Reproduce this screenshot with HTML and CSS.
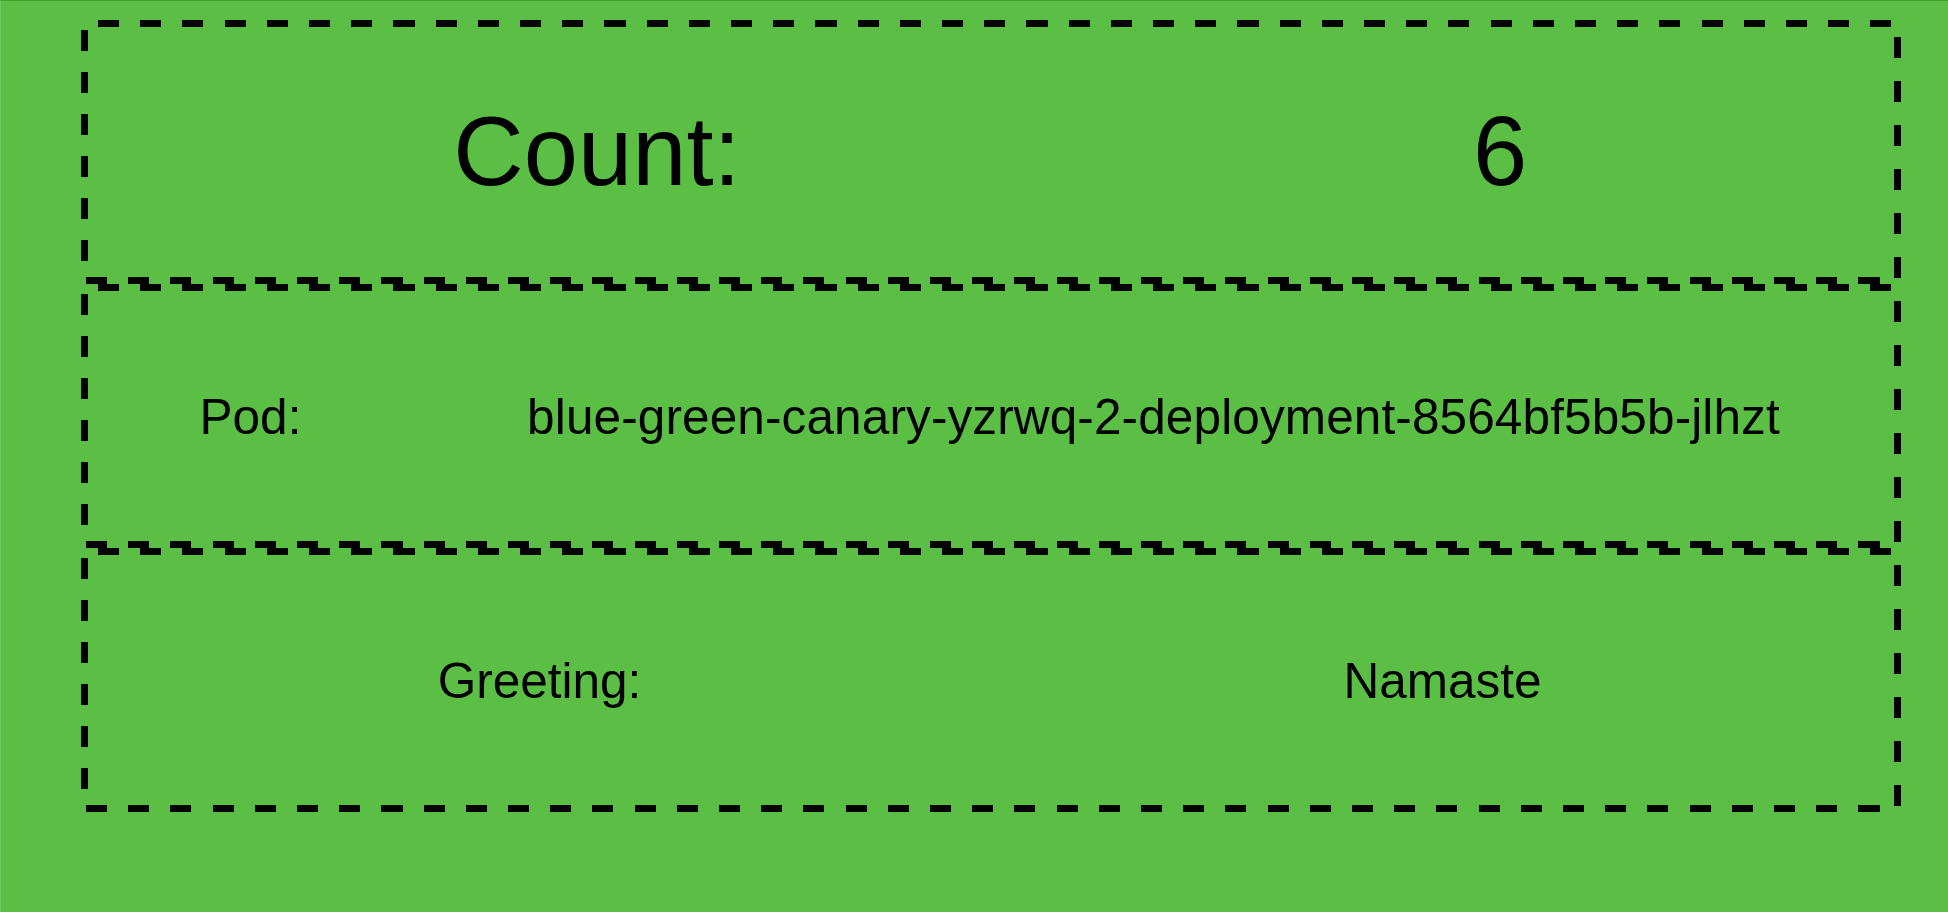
FILE: index.html
```html
<!DOCTYPE html>
<html lang="en">
<head>
<meta charset="utf-8">
<title>Blue Green Canary</title>
<link rel="stylesheet" href="styles.css">
</head>
<body>
  <main class="panel">
    <section class="row row-count">
      <div class="cell">Count:</div>
      <div class="cell">6</div>
    </section>
    <section class="row row-pod">
      <div class="cell">Pod:</div>
      <div class="cell">blue-green-canary-yzrwq-2-deployment-8564bf5b5b-jlhzt</div>
    </section>
    <section class="row row-greeting">
      <div class="cell">Greeting:</div>
      <div class="cell">Namaste</div>
    </section>
  </main>
</body>
</html>
```
FILE: styles.css
```css
html {
  background: #5bbf45;
}
body {
  margin: 0;
  min-height: 912px;
  box-sizing: border-box;
  background: #5bbf45;
  border-top: 1px solid #3ea225;
  border-left: 1px solid #6cc858;
  font-family: "Liberation Sans", Arial, Helvetica, sans-serif;
  color: #000;
}
.panel {
  display: flex;
  flex-direction: column;
  margin: 19px 47px 0 80px;
}
.row {
  --w: 7px;
  --h-dash: repeating-linear-gradient(90deg, #000 0 21.1px, transparent 21.1px 42.2px);
  --v-dash-l: repeating-linear-gradient(180deg, #000 0 21px, transparent 21px 42.1px);
  --v-dash-r: repeating-linear-gradient(180deg, #000 0 21px, transparent 21px 44px);
  display: grid;
  align-items: center;
  height: 264px;
  box-sizing: border-box;
  padding: var(--w);
  border-radius: 6px;
  background:
    var(--h-dash) 17px 0 / calc(100% - 27px) var(--w) no-repeat,
    var(--h-dash) 5px 100% / calc(100% - 26px) var(--w) no-repeat,
    var(--v-dash-l) 0 10px / var(--w) calc(100% - 22px) no-repeat,
    var(--v-dash-r) 100% 17px / var(--w) calc(100% - 22px) no-repeat;
  font-size: 49.5px;
  text-align: center;
}
.row-count {
  grid-template-columns: 1018px 1fr;
  font-size: 97.5px;
}
.row-pod {
  grid-template-columns: 325px 1fr;
}
.row-pod .cell + .cell {
  letter-spacing: 0.12px;
}
.row-greeting {
  grid-template-columns: 1fr 1fr;
}
.cell {
  white-space: nowrap;
}
```
